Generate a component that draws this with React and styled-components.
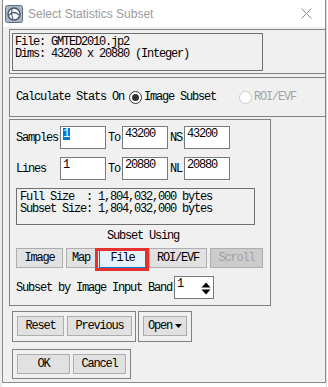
import React from 'react';
import styled, { createGlobalStyle } from 'styled-components';

const GlobalStyle = createGlobalStyle`
    html, body {
        margin: 0;
        padding: 0;
        background: #ffffff;
        overflow: hidden;
    }
`

const Page = styled.div`
    display: flex;
    flex-direction: row;
    width: 328px;
    height: 387px;
    background: #ffffff;
    font-family: "Liberation Mono", "DejaVu Sans Mono", monospace;
    font-size: 12px;
    letter-spacing: -1.2px;
    line-height: 12px;
    color: #000;
`

const LeftEdge = styled.div`
    width: 2px;
    background: #ececec;
`

const Dialog = styled.div`
    display: flex;
    flex-direction: column;
    width: 322px;
    height: 382px;
    border: 1px solid #8c8c8c;
    border-top: none;
    background: #f0f0f0;
`

const TitleBar = styled.div`
    display: flex;
    flex-direction: row;
    align-items: center;
    height: 27px;
    padding-left: 2px;
    background: #ffffff;
    flex-shrink: 0;
`

const TitleText = styled.span`
    font-family: "Liberation Sans", Arial, sans-serif;
    font-size: 12px;
    letter-spacing: 0;
    color: #9a9a9a;
    margin-left: 5px;
    flex: 1;
`

const CloseBox = styled.div`
    display: flex;
    align-items: center;
    justify-content: center;
    width: 30px;
    height: 27px;
    margin-right: 4px;
`

const Client = styled.div`
    display: flex;
    flex-direction: column;
    padding: 2px 0 0 3px;
`

const Frame = styled.div`
    display: flex;
    flex-direction: ${p => p.$column ? 'column' : 'row'};
    align-items: ${p => p.$center ? 'center' : 'flex-start'};
    box-sizing: border-box;
    width: ${p => p.$w}px;
    height: ${p => p.$h}px;
    border: 1px solid #828282;
    padding: ${p => p.$pad || '0'};
    gap: ${p => p.$gap || 0}px;
    margin-top: ${p => p.$mt || 0}px;
    margin-left: ${p => p.$ml || 0}px;
`

const InfoBox = styled.div`
    box-sizing: border-box;
    width: ${p => p.$w}px;
    height: ${p => p.$h}px;
    border: 1px solid #6f6f6f;
    padding: ${p => p.$pad};
    margin: ${p => p.$m};
    white-space: pre;
`

const Row = styled.div`
    display: flex;
    flex-direction: row;
    align-items: center;
    height: ${p => p.$h}px;
    margin-top: ${p => p.$mt || 0}px;
    gap: ${p => p.$gap || 0}px;
`

const Label = styled.span`
    display: inline-block;
    width: ${p => p.$w ? p.$w + 'px' : 'auto'};
    margin: ${p => p.$m || '0'};
    white-space: pre;
    color: ${p => p.$disabled ? '#a3a3a3' : '#000'};
`

const Field = styled.div`
    box-sizing: border-box;
    width: ${p => p.$w || 46}px;
    height: 23px;
    background: #ffffff;
    border: 1px solid #7a7a7a;
    padding: 1px 0 0 2px;
    display: flex;
    align-items: flex-start;
`

const Selected = styled.span`
    background: #0078d7;
    color: #ffffff;
    padding-right: 1px;
`

const Radio = styled.span`
    display: inline-flex;
    align-items: center;
    justify-content: center;
    box-sizing: border-box;
    width: 13px;
    height: 13px;
    border-radius: 50%;
    border: 1px solid ${p => p.$disabled ? '#cccccc' : '#333333'};
    background: #ffffff;
    margin: ${p => p.$m || '0'};
    &::after {
        content: '';
        display: ${p => p.$checked ? 'block' : 'none'};
        width: 7px;
        height: 7px;
        border-radius: 50%;
        background: #333333;
    }
`

const CenterText = styled.div`
    text-align: center;
    height: 12px;
    margin-top: 5px;
`

const Button = styled.div`
    box-sizing: border-box;
    display: flex;
    align-items: center;
    justify-content: center;
    gap: 3px;
    width: ${p => p.$w}px;
    height: 20px;
    border: 1px solid ${p => p.$focus ? '#0078d7' : '#adadad'};
    background: ${p => p.$disabled ? '#cccccc' : p.$focus ? '#e5f1fb' : '#e1e1e1'};
    color: ${p => p.$disabled ? '#a0a0a0' : '#000'};
    white-space: pre;
`

const Highlight = styled.div`
    position: relative;
    &::after {
        content: '';
        position: absolute;
        top: 0;
        left: -4px;
        right: -3px;
        bottom: -3px;
        border: 3px solid #e8302e;
        pointer-events: none;
    }
`

const Spinner = styled.div`
    box-sizing: border-box;
    display: flex;
    flex-direction: row;
    align-items: flex-start;
    justify-content: space-between;
    width: 40px;
    height: 23px;
    background: #ffffff;
    border: 1px solid #7a7a7a;
    padding: 1px 2px 0 2px;
    margin-left: 2px;
`

const ArrowBox = styled.div`
    display: flex;
    align-items: center;
    height: 21px;
`

const SideStrip = styled.div`
    flex: 1;
    background: #ffffff;
    border-left: 1px solid #dcdcdc;
`

function AppIcon() {
    return (
        <svg width="18" height="18" viewBox="0 0 18 18">
            <rect x="0.5" y="0.5" width="17" height="17" rx="2" fill="#a8b6c6" stroke="#5e6e82" />
            <circle cx="9" cy="9" r="6" fill="#f4f6f9" stroke="#46556a" strokeWidth="1.4" />
            <path d="M4 10 Q9 5 14 10" fill="none" stroke="#46556a" strokeWidth="1.2" />
            <path d="M7 4 Q5.5 9 8 14" fill="none" stroke="#46556a" strokeWidth="1" />
        </svg>
    )
}

function CloseIcon() {
    return (
        <svg width="11" height="11" viewBox="0 0 11 11">
            <path d="M0.5 0.5 L10.5 10.5 M10.5 0.5 L0.5 10.5" stroke="#8a8a8a" strokeWidth="1" />
        </svg>
    )
}

function SpinArrows() {
    return (
        <svg width="10" height="13" viewBox="0 0 10 13">
            <path d="M5 0.5 L9.5 5.5 L0.5 5.5 Z" fill="#000" />
            <path d="M0.5 7.5 L9.5 7.5 L5 12.5 Z" fill="#000" />
        </svg>
    )
}

function DownTriangle() {
    return (
        <svg width="7" height="4" viewBox="0 0 7 4">
            <path d="M0 0 L7 0 L3.5 4 Z" fill="#000" />
        </svg>
    )
}

function RangeRow({ label, from, to, sizeLabel, size, selected, mt }) {
    return (
        <Row $h={23} $mt={mt}>
            <Label $w={44}>{label}</Label>
            <Field>{selected ? <Selected>{from}</Selected> : from}</Field>
            <Label $w={12} $m="0 2px">To</Label>
            <Field>{to}</Field>
            <Label $w={12} $m="0 2px">{sizeLabel}</Label>
            <Field>{size}</Field>
        </Row>
    )
}

function App() {
    return (
        <Page>
            <GlobalStyle />
            <LeftEdge />
            <Dialog>
                <TitleBar>
                    <AppIcon />
                    <TitleText>Select Statistics Subset</TitleText>
                    <CloseBox><CloseIcon /></CloseBox>
                </TitleBar>
                <Client>
                    <Frame $w={317} $h={45} $ml={3}>
                        <InfoBox $w={251} $h={38} $m="3px 0 0 2px" $pad="2px 0 0 2px">
                            {"File: GMTED2010.jp2\nDims: 43200 x 20880 (Integer)"}
                        </InfoBox>
                    </Frame>

                    <Frame $w={317} $h={40} $ml={3} $mt={3} $center $pad="0 0 0 6px">
                        <Label>Calculate Stats On</Label>
                        <Radio $checked $m="0 2px 0 5px" />
                        <Label>Image Subset</Label>
                        <Radio $disabled $m="0 2px 0 23px" />
                        <Label $disabled>ROI/EVF</Label>
                    </Frame>

                    <Frame $w={262} $h={187} $ml={3} $mt={2} $column $pad="6px 0 0 6px">
                        <RangeRow label="Samples" from="1" to="43200" sizeLabel="NS" size="43200" selected />
                        <RangeRow label="Lines" from="1" to="20880" sizeLabel="NL" size="20880" mt={8} />
                        <InfoBox $w={239} $h={37} $m="8px 0 0 0" $pad="2px 0 0 3px">
                            {"Full Size  : 1,804,032,000 bytes\nSubset Size: 1,804,032,000 bytes"}
                        </InfoBox>
                        <CenterText style={{ width: 254 }}>Subset Using</CenterText>
                        <Row $h={20} $mt={6} $gap={3}>
                            <Button $w={47}>Image</Button>
                            <Button $w={30}>Map</Button>
                            <Highlight>
                                <Button $w={47} $focus>File</Button>
                            </Highlight>
                            <Button $w={58}>ROI/EVF</Button>
                            <Button $w={53} $disabled>Scroll</Button>
                        </Row>
                        <Row $h={23} $mt={8}>
                            <Label>Subset by Image Input Band</Label>
                            <Spinner>
                                <span>1</span>
                                <ArrowBox><SpinArrows /></ArrowBox>
                            </Spinner>
                        </Row>
                    </Frame>

                    <Row $h={31} $mt={5} $gap={2}>
                        <Frame $w={124} $h={31} $ml={6} $gap={3} $pad="4px 3px 0 4px">
                            <Button $w={47}>Reset</Button>
                            <Button $w={65}>Previous</Button>
                        </Frame>
                        <Frame $w={54} $h={31} $pad="4px 0 0 4px">
                            <Button $w={44}>Open<DownTriangle /></Button>
                        </Frame>
                    </Row>

                    <Frame $w={119} $h={30} $ml={6} $mt={7} $gap={3} $pad="4px 0 0 4px">
                        <Button $w={53}>OK</Button>
                        <Button $w={53}>Cancel</Button>
                    </Frame>
                </Client>
            </Dialog>
            <SideStrip />
        </Page>
    );
}

export default App
